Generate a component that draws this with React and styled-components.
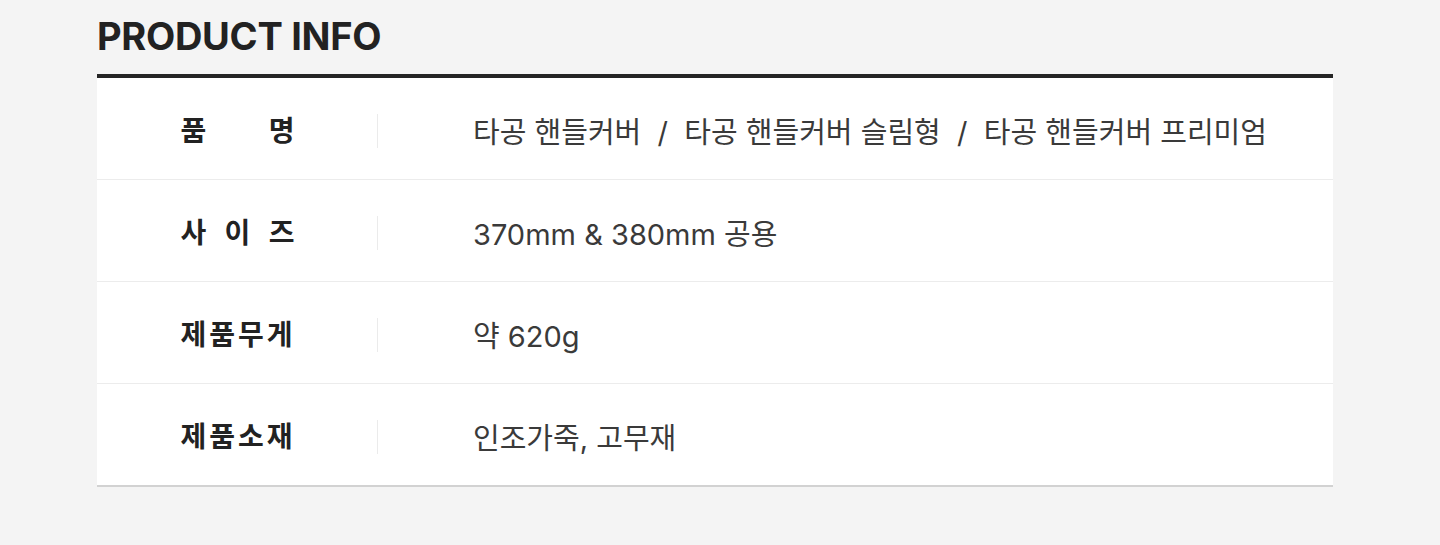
import React from "react";
import styled, { createGlobalStyle } from "styled-components";

const GlobalStyle = createGlobalStyle`
  html, body {
    margin: 0;
    padding: 0;
    background: #f4f4f4;
  }
  body {
    font-family: "Inter", "Noto Sans CJK KR", sans-serif;
    -webkit-font-smoothing: antialiased;
  }
`;

const Page = styled.div`
  min-height: 545px;
  padding: 17px 107px 0 97px;
  box-sizing: border-box;
`;

const Title = styled.h2`
  margin: 0 0 19px;
  font-size: 38px;
  line-height: 38px;
  font-weight: 700;
  color: #222;
  letter-spacing: -0.3px;
`;

const Table = styled.div`
  width: 1236px;
  background: #fff;
  border-top: 4px solid #252525;
  border-bottom: 2px solid #d2d2d2;
`;

const Row = styled.div`
  display: flex;
  align-items: center;
  height: 101px;
  & + & {
    border-top: 1px solid #ececec;
  }
`;

const LabelCell = styled.div`
  position: relative;
  width: 281px;
  flex-shrink: 0;
  display: flex;
  justify-content: center;
  align-self: stretch;
  align-items: center;
  &::after {
    content: "";
    position: absolute;
    right: 0;
    top: 50%;
    width: 1px;
    height: 34px;
    margin-top: -15px;
    background: #ebebeb;
  }
`;

const Label = styled.span`
  display: inline-block;
  width: 120px;
  padding-left: 3px;
  box-sizing: border-box;
  font-size: 28px;
  font-weight: 700;
  color: #222;
  letter-spacing: 3px;
  text-align: ${(p) => (p.$spread ? "justify" : "left")};
  text-align-last: ${(p) => (p.$spread ? "justify" : "left")};
  white-space: ${(p) => (p.$spread ? "normal" : "nowrap")};
`;

const Value = styled.div`
  padding-left: 95px;
  padding-top: 3px;
  font-size: 29px;
  font-weight: 400;
  color: #3a3a3a;
  white-space: pre;
`;

const rows = [
  {
    label: "품 명",
    spread: true,
    value: "타공 핸들커버  /  타공 핸들커버 슬림형  /  타공 핸들커버 프리미엄",
  },
  { label: "사 이 즈", spread: true, value: "370mm & 380mm 공용" },
  { label: "제품무게", spread: false, value: "약 620g" },
  { label: "제품소재", spread: false, value: "인조가죽, 고무재" },
];

export default function App() {
  return (
    <>
      <GlobalStyle />
      <Page>
        <Title>PRODUCT INFO</Title>
        <Table>
          {rows.map((r) => (
            <Row key={r.label}>
              <LabelCell>
                <Label $spread={r.spread}>{r.label}</Label>
              </LabelCell>
              <Value>{r.value}</Value>
            </Row>
          ))}
        </Table>
      </Page>
    </>
  );
}
